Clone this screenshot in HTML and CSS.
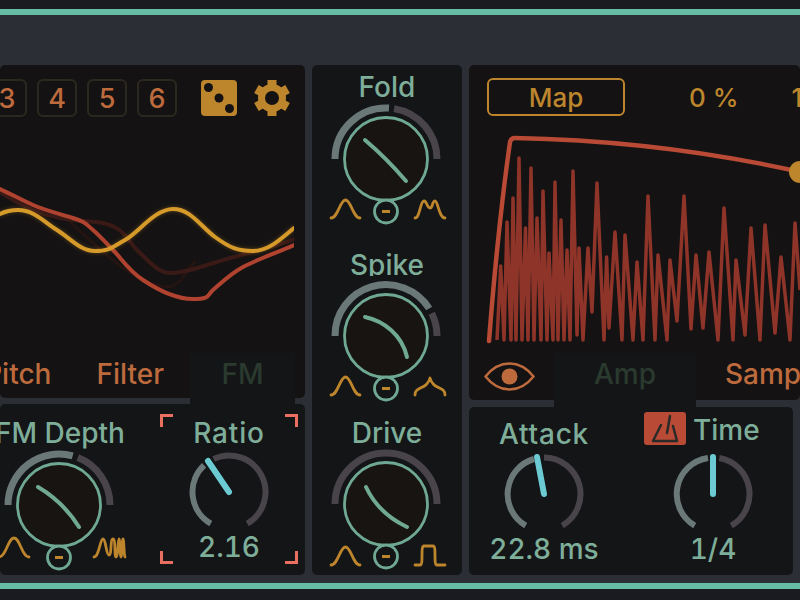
FILE: index.html
```html
<!DOCTYPE html>
<html lang="en">
<head>
  <meta charset="UTF-8">
  <title>Synth device</title>
  <link rel="stylesheet" href="styles.css">
</head>
<body>
  <div class="edge edge-top"></div>

  <main class="rack">
    <section class="col col-left">
      <div class="panel panel-warm scope-panel">
        <div class="slots">
          <span class="slot">3</span>
          <span class="slot">4</span>
          <span class="slot">5</span>
          <span class="slot">6</span>
          <svg class="die" viewBox="0 0 36 36">
            <rect width="36" height="36" rx="4" fill="#bd852c"/>
            <circle cx="7.5" cy="7.5" r="4.5"/>
            <circle cx="18" cy="18" r="4.5"/>
            <circle cx="28.5" cy="28.5" r="4.5"/>
          </svg>
          <svg class="gear" viewBox="-18 -18 36 36">
            <circle r="10.5"/>
            <rect x="-4.5" y="-18" width="9" height="7"/>
            <rect x="-4.5" y="-18" width="9" height="7" transform="rotate(60)"/>
            <rect x="-4.5" y="-18" width="9" height="7" transform="rotate(120)"/>
            <rect x="-4.5" y="-18" width="9" height="7" transform="rotate(180)"/>
            <rect x="-4.5" y="-18" width="9" height="7" transform="rotate(240)"/>
            <rect x="-4.5" y="-18" width="9" height="7" transform="rotate(300)"/>
          </svg>
        </div>
        <svg class="scope" viewBox="0 180 294 170">
          <path class="trace trace-faint" d="M70 222C90 240 100 250 115 262S160 290 172 286 185 270 195 262"/>
          <path class="trace trace-dim" d="M0 192C20 205 40 214 60 218S95 221 103 223 118 228 123 233 133 247 140 253 158 273 170 273 195 269 207 265 245 254 267 248 285 243 294 239"/>
          <path class="trace trace-red" d="M0 189C11 194 22 200 33 205S60 214 73 218 86 224 93 230 104 241 113 250 128 270 143 280 175 299 193 299 207 295 213 290 230 274 243 267 276 253 294 245"/>
          <path class="trace trace-amber" d="M0 214C6 211 12 210 18 210 34 210 44 222 57 230S80 251 95 251 112 247 125 240 155 209 173 209 200 226 215 237 238 251 253 251 280 240 294 228"/>
        </svg>
        <div class="tabs tabs-left">
          <span class="tab-text">Pitch</span>
          <span class="tab-text">Filter</span>
          <span class="tab tab-on">FM</span>
        </div>
      </div>

      <div class="panel panel-cool mod-panel">
        <div class="knob fm-depth">
          <div class="knob-name">FM Depth</div>
          <svg class="dial" viewBox="0 0 150 125">
            <path class="arc-on" d="M23 58A51 51 0 0 1 87.700 8.900"/>
            <path class="arc-off" d="M92.800 10.600A51 51 0 0 1 125 58"/>
            <circle class="dial-face" cx="74" cy="58" r="41.500"/>
            <path class="dial-curve" d="M53 40C70 50 84 64 94 80"/>
            <circle class="dial-mod" cx="74" cy="110.500" r="11.500"/>
            <path class="dial-dash" d="M70 110.500H78"/>
            <path class="shape" d="M14 110C21 110 23 91 29 91S37 110 44 110"/>
            <path class="shape" d="M109 110C114 110 115 92 118 92S121 108 124 108 125 92 128 92 129 110 131 110 133 92 134 92 135 110 136 110 137 92 138 92 139 110 140 110"/>
          </svg>
        </div>
        <div class="mini ratio">
          <span class="corner corner-tl"></span>
          <span class="corner corner-tr"></span>
          <span class="corner corner-bl"></span>
          <span class="corner corner-br"></span>
          <div class="knob-name">Ratio</div>
          <svg class="mini-dial" viewBox="-42 -42 84 84">
            <path class="mini-on" d="M-18.250 31.600A36.500 36.500 0 0 1 -24.900 -26.700"/>
            <path class="mini-off" d="M-15.400 -33.100A36.500 36.500 0 0 1 18.250 31.600"/>
            <path class="needle" d="M0 0L-21 -31"/>
          </svg>
          <div class="knob-value">2.16</div>
        </div>
      </div>
    </section>

    <section class="col col-mid">
      <div class="panel panel-cool shaper-panel">
        <div class="knob knob-fold">
          <div class="knob-name">Fold</div>
          <svg class="dial" viewBox="0 0 150 125">
            <path class="arc-on" d="M23 58A51 51 0 0 1 77 7.100"/>
            <path class="arc-off" d="M82 7.600A51 51 0 0 1 125 58"/>
            <circle class="dial-face" cx="74" cy="58" r="41.500"/>
            <path class="dial-curve" d="M53 39C66 50 82 66 94 80"/>
            <circle class="dial-mod" cx="74" cy="110.500" r="11.500"/>
            <path class="dial-dash" d="M70 110.500H78"/>
            <path class="shape" d="M19 117C26 117 28 99 33.500 99S41 117 48 117"/>
            <path class="shape" d="M103 117C108 117 108 100 112 100 115 100 115 107 118 107S120 100 123 100 127 117 133 117"/>
          </svg>
        </div>
        <div class="knob knob-spike">
          <div class="knob-name">Spike</div>
          <svg class="dial" viewBox="0 0 150 125">
            <path class="arc-on" d="M23 58A51 51 0 0 1 117.200 30.500"/>
            <path class="arc-off" d="M119.700 35.300A51 51 0 0 1 125 58"/>
            <circle class="dial-face" cx="74" cy="58" r="41.500"/>
            <path class="dial-curve" d="M53 39C72 43 90 57 95 79"/>
            <circle class="dial-mod" cx="74" cy="110.500" r="11.500"/>
            <path class="dial-dash" d="M70 110.500H78"/>
            <path class="shape" d="M19 117C26 117 28 99 33.500 99S41 117 48 117"/>
            <path class="shape" d="M103 117C103 108 115 112 118 100 121 112 133 108 133 117"/>
          </svg>
        </div>
        <div class="knob knob-drive">
          <div class="knob-name">Drive</div>
          <svg class="dial" viewBox="0 0 150 125">
            <path class="arc-off" d="M23 58A51 51 0 0 1 125 58"/>
            <circle class="dial-face" cx="74" cy="58" r="41.500"/>
            <path class="dial-curve" d="M54 41C62 58 76 72 95 81"/>
            <circle class="dial-mod" cx="74" cy="110.500" r="11.500"/>
            <path class="dial-dash" d="M70 110.500H78"/>
            <path class="shape" d="M19 119C26 119 28 101 33.500 101S41 119 48 119"/>
            <path class="shape" d="M103 119H108C112 119 108 100 112 100H121C125 100 121 119 125 119H133"/>
          </svg>
        </div>
      </div>
    </section>

    <section class="col col-right">
      <div class="panel panel-warm env-panel">
        <div class="env-head">
          <span class="map-btn">Map</span>
          <span class="amount">0 %</span>
          <span class="amount amount-next">100 %</span>
        </div>
        <svg class="env" viewBox="469 125 331 225">
          <path class="wave" d="M497 340L500.700 266 504 340 507 222 511 340 513 198 516 340 519 158 522 340 525.500 228 528 340 531 168 534 340 537 218 541 340 543 191 547 340 549 253 553 340 555 182 558 340 561 220 564 340 567 250 570 340 573 171 577 335 579 248 583 340 588 248 592 312 597 183 604 340 606.600 257 609 328 615 232 622 340 625 235 633 340 637 262 643 340 648 196 655 340 658 255 667 340 670 260 677 321 684 196 691 329 696 255 703 328 709 252 718 340 724 208 733 340 736 260 745 335 751 228 760 340 765 225 775 333 781 257 790 340 795 223 800 290"/>
          <path class="env-line" d="M489 341C493 290 501 205 510 142Q511 138 515 138C620 140 710 152 796 171"/>
          <circle class="env-dot" cx="800" cy="172" r="11"/>
        </svg>
        <div class="tabs tabs-right">
          <svg class="eye" viewBox="0 0 51 29">
            <path d="M1.500 14.500C9 5 17 1.500 25.500 1.500S42 5 49.500 14.500C42 24 34 27.500 25.500 27.500S9 24 1.500 14.500Z"/>
            <circle cx="25.500" cy="14.500" r="8"/>
          </svg>
          <span class="tab tab-on tab-amp">Amp</span>
          <span class="tab-text">Sample</span>
        </div>
      </div>

      <div class="panel panel-cool time-panel">
        <div class="mini attack">
          <div class="knob-name">Attack</div>
          <svg class="mini-dial" viewBox="-42 -42 84 84">
            <path class="mini-on" d="M-18.250 31.600A36.500 36.500 0 0 1 -10 -35"/>
            <path class="mini-off" d="M0 -36.500A36.500 36.500 0 0 1 18.250 31.600"/>
            <path class="needle" d="M0 0L-7 -37"/>
          </svg>
          <div class="knob-value">22.8 ms</div>
        </div>
        <div class="mini time">
          <div class="time-head">
            <span class="sync-btn">
              <svg viewBox="0 0 42 33">
                <path d="M17 13L9 29H33L29 14M23 21L26 4"/>
              </svg>
            </span>
            <span class="knob-name">Time</span>
          </div>
          <svg class="mini-dial" viewBox="-42 -42 84 84">
            <path class="mini-on" d="M-18.250 31.600A36.500 36.500 0 0 1 -5 -36"/>
            <path class="mini-off" d="M6.300 -36A36.500 36.500 0 0 1 18.250 31.600"/>
            <path class="needle" d="M0 0V-37"/>
          </svg>
          <div class="knob-value">1/4</div>
        </div>
      </div>
    </section>
  </main>

  <div class="edge edge-bottom"></div>
</body>
</html>
```

FILE: styles.css
```css
* {
  box-sizing: border-box;
}

html, body {
  height: 600px;
}

body {
  margin: 0;
  overflow: hidden;
  display: flex;
  flex-direction: column;
  background: #2b2f35;
  font-family: Inter, "Liberation Sans", sans-serif;
  font-size: 28px;
  font-weight: 500;
}

svg {
  display: block;
}

/* teal rules top and bottom */
.edge {
  background: #191b20;
  flex: none;
}

.edge-top {
  height: 15px;
  border-bottom: 6px solid #67bda4;
}

.edge-bottom {
  height: 17px;
  border-top: 6px solid #67bda4;
}

.rack {
  height: 510px;
  margin: 50px 0 8px;
  flex: none;
  display: flex;
  gap: 7px;
}

.col {
  display: flex;
  flex-direction: column;
}

.col-left {
  width: 305px;
  gap: 6px;
}

.col-mid {
  width: 150px;
}

.col-right {
  width: 331px;
  gap: 7px;
}

.panel {
  border-radius: 5px;
}

.panel-warm {
  background: #141213;
}

.panel-cool {
  background: #141517;
}

/* scope */
.scope-panel {
  height: 333px;
  display: flex;
  flex-direction: column;
}

.slots {
  display: flex;
  justify-content: flex-end;
  align-items: center;
  gap: 10px;
  padding: 14px 15px 0 0;
}

.slot {
  width: 40px;
  height: 38px;
  flex: none;
  display: flex;
  align-items: center;
  justify-content: center;
  border: 2px solid #2b291f;
  border-radius: 6px;
  color: #bd6a3d;
  font-size: 27px;
  padding-top: 1px;
}

.die {
  width: 36px;
  height: 36px;
  flex: none;
  margin-left: 14px;
  fill: #141213;
}

.gear {
  width: 36px;
  height: 36px;
  flex: none;
  margin-left: 7px;
  fill: #bd852c;
}

.gear circle {
  fill: none;
  stroke: #bd852c;
  stroke-width: 7;
}

.scope {
  width: 294px;
  height: 170px;
  margin-top: 63px;
}

.trace {
  fill: none;
  stroke-width: 4;
  stroke-linecap: round;
}

.trace-faint {
  stroke: #241412;
  stroke-width: 3;
}

.trace-dim {
  stroke: #3a1a16;
}

.trace-red {
  stroke: #b0432f;
}

.trace-amber {
  stroke: #d69a2b;
  filter: drop-shadow(0 0 2px rgba(214, 154, 43, 0.35));
}

.tabs {
  display: flex;
  align-items: flex-start;
  margin-top: 3px;
}

.tabs-left {
  justify-content: flex-end;
  padding-right: 10px;
  margin-bottom: -6px;
  gap: 45px;
}

.tabs-right {
  padding-left: 15px;
  margin-bottom: -7px;
}

.tab-text {
  flex: none;
  color: #bd6a3d;
  line-height: 43px;
}

.tabs-left .tab-text:nth-child(2) {
  margin-right: -19px;
}

.tab {
  height: 51px;
  width: 105px;
  flex: none;
  text-align: center;
  line-height: 43px;
}

.tab-on {
  background: #141517;
  color: #2a3a2e;
}

.tab-amp {
  width: 142px;
  height: 54px;
  margin: 0 29px 0 19px;
}

.eye {
  width: 51px;
  height: 29px;
  margin-top: 9px;
  flex: none;
}

.eye path {
  fill: none;
  stroke: #bd6a3d;
  stroke-width: 2.5;
}

.eye circle {
  fill: #bd6a3d;
}

/* knobs */
.knob {
  width: 150px;
  flex: none;
}

.knob-name {
  height: 30px;
  color: #7eae99;
  line-height: 34px;
  text-align: center;
}

.knob-value {
  height: 30px;
  color: #7eae99;
  line-height: 32px;
  text-align: center;
  margin-top: -3px;
  font-variant-numeric: tabular-nums;
}

.dial {
  width: 150px;
  height: 125px;
}

.arc-on,
.arc-off,
.mini-on,
.mini-off {
  fill: none;
}

.arc-on,
.arc-off {
  stroke-width: 7;
}

.mini-on,
.mini-off {
  stroke-width: 6;
}

.arc-on,
.mini-on {
  stroke: #6b7878;
}

.arc-off,
.mini-off {
  stroke: #48444a;
}

.dial-face {
  fill: #181412;
  stroke: #6fa994;
  stroke-width: 2.8;
}

.dial-curve {
  fill: none;
  stroke: #6fa994;
  stroke-width: 4;
  stroke-linecap: round;
}

.dial-mod {
  fill: #141517;
  stroke: #6fa994;
  stroke-width: 2.8;
}

.dial-dash {
  stroke: #bd852c;
  stroke-width: 3;
}

.shape {
  fill: none;
  stroke: #bd852c;
  stroke-width: 2.8;
  stroke-linecap: round;
  stroke-linejoin: round;
}

.shaper-panel {
  height: 100%;
  padding-top: 6px;
}

.knob-fold .knob-name {
  line-height: 32px;
}

.knob-spike {
  margin-top: 22px;
}

.knob-spike .knob-name {
  height: 28px;
  margin-bottom: 2px;
  overflow: hidden;
}

.knob-drive {
  margin-top: 13px;
}

.mod-panel {
  flex: 1;
  display: flex;
  align-items: flex-start;
  padding-top: 12px;
}

.fm-depth {
  margin-left: -15px;
}

.fm-depth .knob-name {
  margin-bottom: 1px;
}

.mini {
  display: flex;
  flex-direction: column;
  align-items: center;
}

.mini-dial {
  width: 84px;
  height: 84px;
}

.needle {
  fill: none;
  stroke: #6ccad3;
  stroke-width: 6;
  stroke-linecap: round;
}

.ratio {
  position: relative;
  width: 138px;
  margin-left: 25px;
  margin-top: -2px;
  padding-top: 2px;
  height: 150px;
}

.ratio .knob-name {
  margin-bottom: 4px;
  letter-spacing: 0.8px;
}

.corner {
  position: absolute;
  width: 13px;
  height: 13px;
  border: 0 solid #e96f60;
}

.corner-tl {
  top: 0;
  left: 0;
  border-width: 3px 0 0 3px;
}

.corner-tr {
  top: 0;
  right: 0;
  border-width: 3px 3px 0 0;
}

.corner-bl {
  bottom: 0;
  left: 0;
  border-width: 0 0 3px 3px;
}

.corner-br {
  bottom: 0;
  right: 0;
  border-width: 0 3px 3px 0;
}

/* envelope */
.env-panel {
  height: 335px;
  display: flex;
  flex-direction: column;
}

.env-head {
  display: flex;
  align-items: center;
  padding: 13px 0 0 18px;
  white-space: nowrap;
  color: #bd852c;
  font-size: 26px;
}

.map-btn {
  width: 138px;
  height: 38px;
  flex: none;
  display: flex;
  align-items: center;
  justify-content: center;
  border: 2.5px solid #bd852c;
  border-radius: 6px;
}

.amount {
  margin-left: 64px;
  flex: none;
}

.amount-next {
  margin-left: 53px;
}

.env {
  width: 331px;
  height: 225px;
  margin-top: 9px;
  overflow: visible;
}

.wave {
  fill: none;
  stroke: #8f3429;
  stroke-width: 3.5;
  stroke-linejoin: round;
}

.env-line {
  fill: none;
  stroke: #b84a36;
  stroke-width: 4.5;
  stroke-linecap: round;
}

.env-dot {
  fill: #bd852c;
}

/* attack and time */
.time-panel {
  flex: 1;
  width: 324px;
  display: flex;
  align-items: flex-start;
  gap: 19px;
  padding-top: 5px;
}

.attack {
  width: 150px;
  padding-top: 5px;
}

.attack .knob-name {
  margin-bottom: 5px;
  letter-spacing: 0.8px;
}

.time {
  width: 150px;
}

.time-head {
  width: 100%;
  height: 33px;
  display: flex;
  gap: 7px;
  padding-left: 6px;
  margin-bottom: 7px;
}

.sync-btn {
  width: 42px;
  height: 33px;
  flex: none;
  background: #b84a36;
  border-radius: 3px;
}

.sync-btn path {
  fill: none;
  stroke: #2a2a28;
  stroke-width: 2.5;
  stroke-linecap: round;
  stroke-linejoin: round;
}

.time-head .knob-name {
  margin-top: 1px;
}
```
